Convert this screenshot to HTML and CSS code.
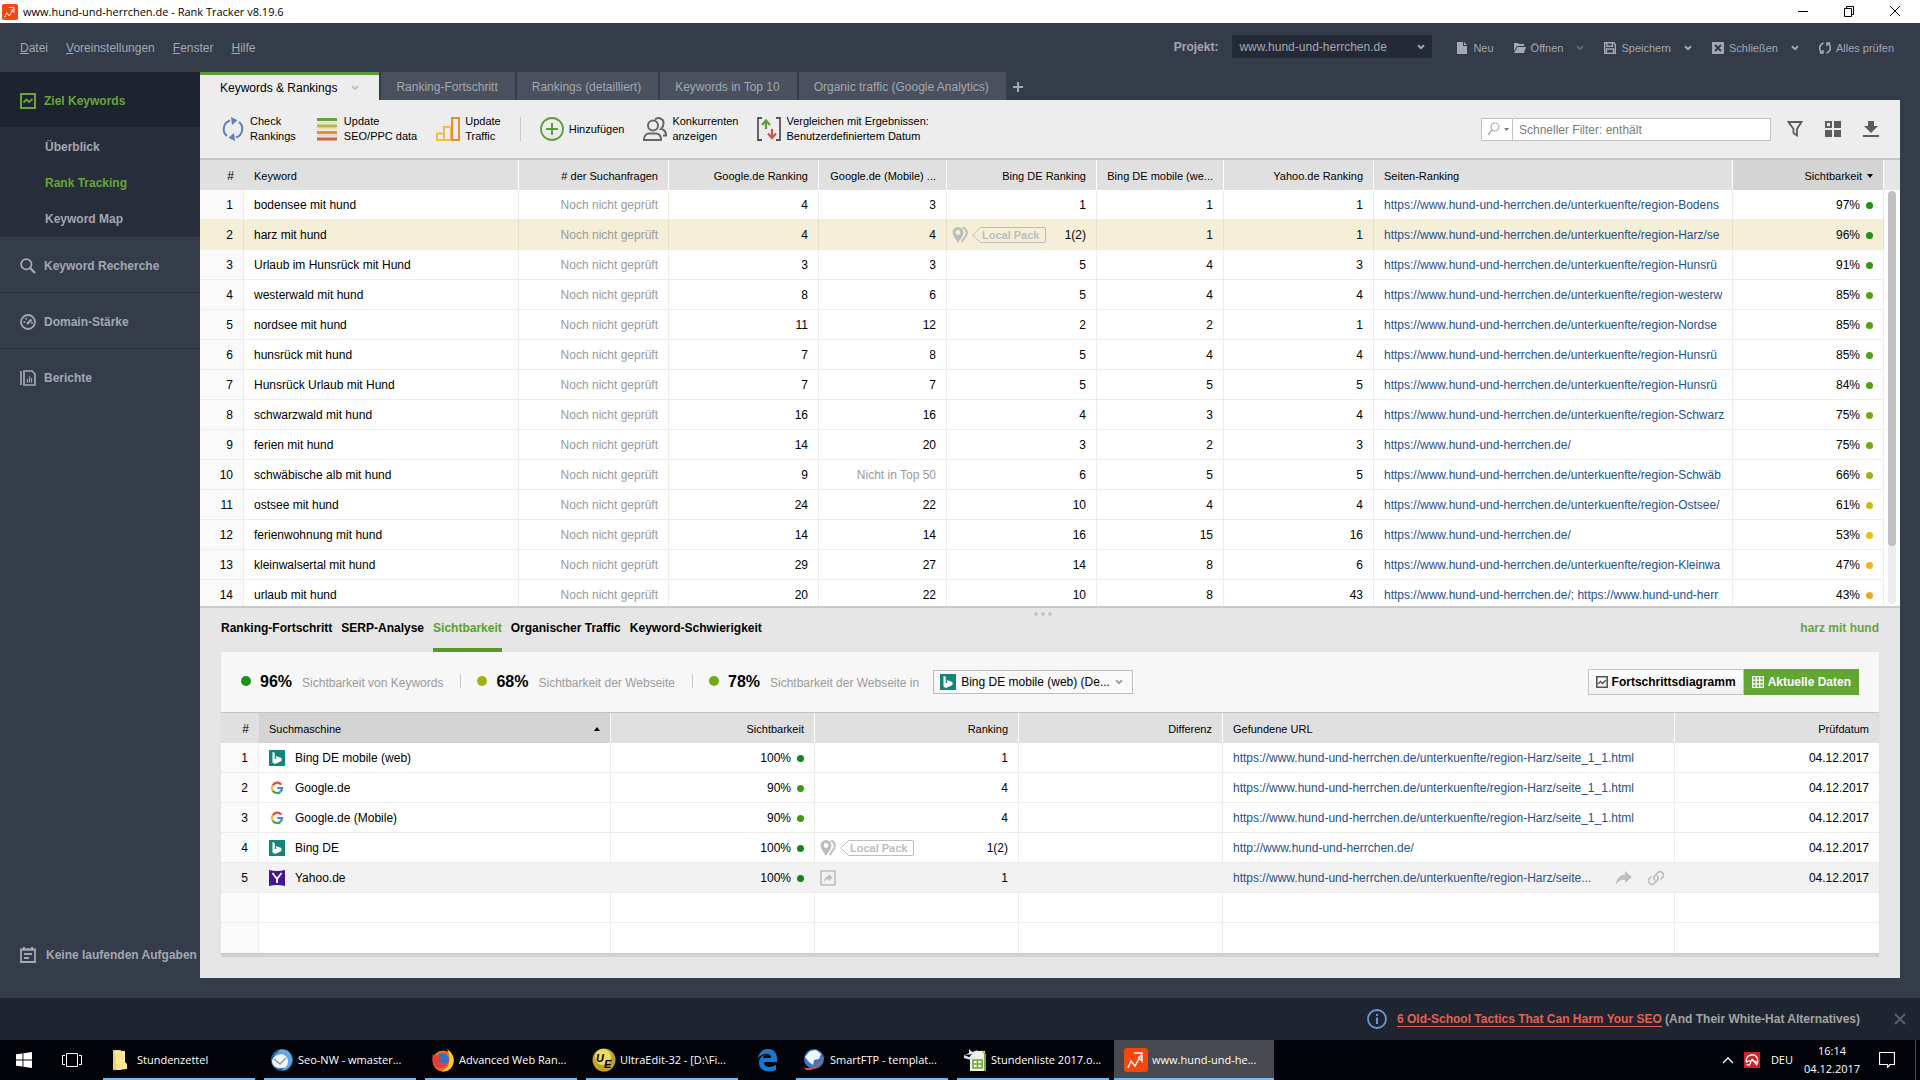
FILE: index.html
```
<!DOCTYPE html>
<html lang="de">
<head>
    <meta charset="UTF-8">
    <meta name="viewport" content="width=device-width, initial-scale=1.0">
    <title>www.hund-und-herrchen.de - Rank Tracker v8.19.6</title>
    <link rel="stylesheet" href="styles.css">
</head>
<body>
    <!-- Shared icons -->
    <svg class="sprite" aria-hidden="true">
        <symbol id="i-logo" viewBox="0 0 24 24"><rect width="24" height="24" rx="3" fill="#f4470f"/><path d="M4 20l3-7 4 5 6-11M10 5h8v8l-4-4" fill="none" stroke="#fff" stroke-width="1.400"/></symbol>
        <symbol id="i-chev" viewBox="0 0 8 6"><path d="M1 1.2l3 3 3-3" fill="none" stroke="currentColor" stroke-width="2"/></symbol>
        <symbol id="i-bing" viewBox="0 0 16 16"><rect width="16" height="16" fill="#14837b"/><path d="M3.500 2l2.200.8v6.500l1.800-.9-1-2.300L12.500 8v3L6 14l-2.500-1.400z" fill="#fff"/></symbol>
        <symbol id="i-google" viewBox="0 0 16 16"><g fill="none" stroke-width="2.200"><path d="M12.200 4.600A5 5 0 0 0 3.800 5.400" stroke="#e0493c"/><path d="M3.800 5.400a5 5 0 0 0 0 5.200" stroke="#f2b632"/><path d="M3.800 10.600a5 5 0 0 0 7.600 1.200" stroke="#3aa757"/><path d="M11.400 11.800A5 5 0 0 0 13 8H8.200" stroke="#4a83ec"/></g></symbol>
        <symbol id="i-yahoo" viewBox="0 0 16 16"><path d="M0 0q8 2 16 0v16q-8-2-16 0z" fill="#47158f"/><path d="M3.500 3L8 9l4.500-6M8 9v4" fill="none" stroke="#fff" stroke-width="1.800"/></symbol>
        <symbol id="i-pins" viewBox="0 0 16 18"><path d="M6 1a5.400 5.400 0 0 0-5.400 5.400C.6 10 4 13 6 17c2-4 5.400-7 5.400-10.600A5.400 5.400 0 0 0 6 1zm0 3a2.400 2.400 0 1 1 0 4.800A2.400 2.400 0 0 1 6 4z" fill="currentColor" fill-rule="evenodd"/><path d="M11 1.500c5 2.500 5 7 1 11L9.800 16" fill="none" stroke="currentColor" stroke-width="2"/></symbol>
        <symbol id="i-tag" viewBox="0 0 74 16"><path d="M8.500.5H72a1.500 1.500 0 0 1 1.500 1.500v12a1.500 1.500 0 0 1-1.500 1.500H8.500L.8 8z" fill="none" stroke="currentColor"/></symbol>
        <symbol id="i-share" viewBox="0 0 16 16"><path d="M9 1l7 6-7 6V9.800C5 9.500 2 11 0 15c0-6 4-10 9-10.500z" fill="currentColor"/></symbol>
    </svg>

    <header class="titlebar">
        <svg class="title-logo"><use href="#i-logo"/></svg>
        <span class="title-text">www.hund-und-herrchen.de - Rank Tracker v8.19.6</span>
        <div class="window-buttons">
            <button type="button" aria-label="Minimieren"><svg viewBox="0 0 12 12"><path d="M1 6.500h10" stroke="#000"/></svg></button>
            <button type="button" aria-label="Verkleinern"><svg viewBox="0 0 12 12"><path d="M1.500 3.500h7v8h-7zM3.500 3.500v-2h7v8h-2" fill="none" stroke="#000"/></svg></button>
            <button type="button" aria-label="Schließen"><svg viewBox="0 0 12 12"><path d="M1 1l10 10M11 1L1 11" stroke="#000"/></svg></button>
        </div>
    </header>

    <div class="menubar">
        <nav class="menu">
            <a href="#"><u>D</u>atei</a>
            <a href="#"><u>V</u>oreinstellungen</a>
            <a href="#"><u>F</u>enster</a>
            <a href="#"><u>H</u>ilfe</a>
        </nav>
        <div class="project">
            <label for="project">Projekt:</label>
            <div class="project-box">
                <select id="project"><option>www.hund-und-herrchen.de</option></select>
                <svg class="chev"><use href="#i-chev"/></svg>
            </div>
        </div>
        <div class="actions">
            <button type="button"><svg viewBox="0 0 12 12"><path d="M1 0h6v4h4v8H1zM8 0l3 3H8z" fill="currentColor"/></svg>Neu</button>
            <button type="button" class="has-menu"><svg viewBox="0 0 12 12"><path d="M0 1h4l1 1h5v2H3L0 9zM3.500 5H12l-2 6H0z" fill="currentColor"/></svg>Öffnen<svg class="chev dim"><use href="#i-chev"/></svg></button>
            <button type="button" class="has-menu"><svg viewBox="0 0 12 12"><path d="M.7.7h9l1.600 1.600v9H.7zM3 .7v3.500h5.500V.7M2.500 11V7h7v4" fill="none" stroke="currentColor" stroke-width="1.400"/></svg>Speichern<svg class="chev"><use href="#i-chev"/></svg></button>
            <button type="button" class="has-menu"><svg viewBox="0 0 12 12"><path d="M0 0h12v12H0z" fill="currentColor"/><path d="M3 3l6 6M9 3L3 9" stroke="#343b49" stroke-width="2"/></svg>Schließen<svg class="chev"><use href="#i-chev"/></svg></button>
            <button type="button"><svg viewBox="0 0 12 12"><path d="M4.500 1C-.5 3-.2 8.500 3 10.500M7.500 11c5-2 4.700-7.500 1.500-9.500M.8 11h3.200V8M11.200 1H8v3" fill="none" stroke="currentColor" stroke-width="1.500"/></svg>Alles prüfen</button>
        </div>
    </div>

    <div class="workspace">
        <aside class="sidebar">
            <a class="side-item active" href="#"><svg viewBox="0 0 16 16"><path d="M1 1h14v14H1z" fill="none" stroke="currentColor" stroke-width="2"/><path d="M3.500 9.500l3-3 2.500 2.500 3.500-3" fill="none" stroke="currentColor" stroke-width="1.800"/></svg>Ziel Keywords</a>
            <nav class="side-sub">
                <a href="#">Überblick</a>
                <a class="current" href="#">Rank Tracking</a>
                <a href="#">Keyword Map</a>
            </nav>
            <a class="side-item" href="#"><svg viewBox="0 0 16 16"><circle cx="6.300" cy="6.300" r="5.200" fill="none" stroke="currentColor" stroke-width="1.800"/><path d="M10 10l5 5" stroke="currentColor" stroke-width="2.400"/></svg>Keyword Recherche</a>
            <a class="side-item" href="#"><svg viewBox="0 0 16 16"><circle cx="8" cy="8" r="7" fill="none" stroke="currentColor" stroke-width="1.800"/><path d="M7 10l4.500-4.500" stroke="currentColor" stroke-width="2.400"/><circle cx="4.300" cy="8" r="1" fill="currentColor"/><circle cx="6.200" cy="4.800" r="1" fill="currentColor"/><circle cx="12" cy="9" r="1" fill="currentColor"/></svg>Domain-Stärke</a>
            <a class="side-item" href="#"><svg viewBox="0 0 16 16"><path d="M1 1v14M4 1h8l3 3v11H4z" fill="none" stroke="currentColor" stroke-width="1.700"/><path d="M7.500 12.500V9M9.500 12.500v-6M11.500 12.500V8" stroke="currentColor" stroke-width="1.200"/></svg>Berichte</a>
            <div class="tasks"><svg viewBox="0 0 16 16"><path d="M1 2.500h14V15H1z" fill="none" stroke="currentColor" stroke-width="1.800"/><path d="M2 2.500h12M4 0v3M12 0v3M4 7h8M4 11h5" stroke="currentColor" stroke-width="2"/></svg>Keine laufenden Aufgaben</div>
        </aside>

        <main class="content">
            <nav class="tabs">
                <a class="tab active" href="#">Keywords &amp; Rankings<svg class="chev"><use href="#i-chev"/></svg></a>
                <a class="tab" href="#">Ranking-Fortschritt</a>
                <a class="tab" href="#">Rankings (detailliert)</a>
                <a class="tab" href="#">Keywords in Top 10</a>
                <a class="tab" href="#">Organic traffic (Google Analytics)</a>
                <button type="button" class="tab-add" aria-label="Tab hinzufügen"><svg viewBox="0 0 10 10"><path d="M5 0v10M0 5h10" stroke="currentColor" stroke-width="2"/></svg></button>
            </nav>

            <div class="toolbar">
                <button type="button" class="tool"><svg viewBox="0 0 24 24"><path d="M9 3.500a9 9 0 0 0-3 15.500M15 20.500A9 9 0 0 0 18 5" fill="none" stroke="#5b82b5" stroke-width="2"/><path d="M10 0l6.500 3.200L11 8zM14 24l-6.500-3.200L13 16z" fill="#5b82b5"/></svg><span>Check<br>Rankings</span></button>
                <button type="button" class="tool"><svg viewBox="0 0 24 24"><path d="M2 2.500h20" stroke="#6b9e4a" stroke-width="3"/><path d="M2 6h20" stroke="#dfe8b8" stroke-width="2"/><path d="M2 9h20" stroke="#b4b84c" stroke-width="3"/><path d="M2 12h20" stroke="#f3e3a8" stroke-width="2"/><path d="M2 15.500h20" stroke="#e0923a" stroke-width="3"/><path d="M2 18.500h20" stroke="#f6d0b8" stroke-width="2"/><path d="M2 22h20" stroke="#d05f4c" stroke-width="3"/></svg><span>Update<br>SEO/PPC data</span></button>
                <button type="button" class="tool"><svg viewBox="0 0 24 24"><path d="M1 16.500h7V23H1zM8 10h7v13H8z" fill="none" stroke="#f0bf3e" stroke-width="2"/><path d="M16 1h7v22h-7z" fill="none" stroke="#e0903a" stroke-width="2"/></svg><span>Update<br>Traffic</span></button>
                <i class="divider"></i>
                <button type="button" class="tool"><svg viewBox="0 0 24 24"><circle cx="12" cy="12" r="11" fill="none" stroke="#5b9e3a" stroke-width="1.800"/><path d="M12 6v12M6 12h12" stroke="#5b9e3a" stroke-width="2"/></svg><span>Hinzufügen</span></button>
                <button type="button" class="tool"><svg viewBox="0 0 24 24"><g fill="none" stroke="#666" stroke-width="2"><circle cx="10" cy="8.500" r="5"/><path d="M1 23c0-4.500 2.500-6.500 5-6.500h7c3 0 5 2 5 6.500zM12 2.500c3-3 9-1 8.500 4 0 3-1.500 4.500-2.500 5.500 3 .5 5 2.500 5 6.500h-3"/></g></svg><span>Konkurrenten<br>anzeigen</span></button>
                <button type="button" class="tool"><svg viewBox="0 0 24 24"><path d="M5 1H1v22h4M19 1h4v22h-4" fill="none" stroke="#555" stroke-width="1.800"/><path d="M9 12V4M5 8l4-4.500L13 8" fill="none" stroke="#5b9e3a" stroke-width="2.200"/><path d="M15 12v8M11 16.500l4 4.500 4-4.500" fill="none" stroke="#cf5548" stroke-width="2.200"/></svg><span>Vergleichen mit Ergebnissen:<br>Benutzerdefiniertem Datum</span></button>
                <div class="search">
                    <button type="button" aria-label="Suchoptionen"><svg viewBox="0 0 22 14"><circle cx="8" cy="5" r="4" fill="none" stroke="#aaa" stroke-width="1.200"/><path d="M5 8l-4 5" stroke="#aaa" stroke-width="1.500"/><path d="M17 6h5l-2.500 3z" fill="#777"/></svg></button>
                    <input type="text" aria-label="Schneller Filter" placeholder="Schneller Filter: enthält">
                </div>
                <div class="view-tools">
                    <button type="button" aria-label="Filter"><svg viewBox="0 0 16 16"><path d="M1.500 1h13L10 8v6.500L6.500 12V8z" fill="none" stroke="#5c5c5c" stroke-width="1.800"/></svg></button>
                    <button type="button" aria-label="Ansicht"><svg viewBox="0 0 16 16"><path d="M9 0h7v7H9zM0 9h7v7H0zM9 9h7v7H9z" fill="#5c5c5c"/><path d="M1 1h5v5H1z" fill="none" stroke="#5c5c5c" stroke-width="2"/></svg></button>
                    <button type="button" aria-label="Export"><svg viewBox="0 0 16 16"><path d="M5 0h6v5h4l-7 7-7-7h4zM0 14h16v2H0z" fill="#5c5c5c"/></svg></button>
                </div>
            </div>

            <section class="keywords">
                <table class="grid">
                    <colgroup><col class="k-num"><col class="k-key"><col class="k-150"><col class="k-150"><col class="k-128"><col class="k-150"><col class="k-127"><col class="k-150"><col><col class="k-151"><col class="k-16"></colgroup>
                    <thead>
                        <tr><th class="r">#</th><th>Keyword</th><th class="r"># der Suchanfragen</th><th class="r">Google.de Ranking</th><th class="r">Google.de (Mobile) ...</th><th class="r">Bing DE Ranking</th><th class="r">Bing DE mobile (we...</th><th class="r">Yahoo.de Ranking</th><th>Seiten-Ranking</th><th class="r sorted">Sichtbarkeit<i class="sort down"></i></th><th class="corner"></th></tr>
                    </thead>
                    <tbody>
                        <tr><td>1</td><td>bodensee mit hund</td><td class="na">Noch nicht geprüft</td><td>4</td><td>3</td><td>1</td><td>1</td><td>1</td><td><a href="#">https://www.hund-und-herrchen.de/unterkuenfte/region-Bodens</a></td><td>97%<i class="dot g1"></i></td><td></td></tr>
                        <tr class="selected"><td>2</td><td>harz mit hund</td><td class="na">Noch nicht geprüft</td><td>4</td><td>4</td><td><div class="rank"><svg class="pins"><use href="#i-pins"/></svg><span class="tag"><svg><use href="#i-tag"/></svg>Local Pack</span><span>1(2)</span></div></td><td>1</td><td>1</td><td><a href="#">https://www.hund-und-herrchen.de/unterkuenfte/region-Harz/se</a></td><td>96%<i class="dot g1"></i></td><td></td></tr>
                        <tr><td>3</td><td>Urlaub im Hunsrück mit Hund</td><td class="na">Noch nicht geprüft</td><td>3</td><td>3</td><td>5</td><td>4</td><td>3</td><td><a href="#">https://www.hund-und-herrchen.de/unterkuenfte/region-Hunsrü</a></td><td>91%<i class="dot g2"></i></td><td></td></tr>
                        <tr><td>4</td><td>westerwald mit hund</td><td class="na">Noch nicht geprüft</td><td>8</td><td>6</td><td>5</td><td>4</td><td>4</td><td><a href="#">https://www.hund-und-herrchen.de/unterkuenfte/region-westerw</a></td><td>85%<i class="dot g3"></i></td><td></td></tr>
                        <tr><td>5</td><td>nordsee mit hund</td><td class="na">Noch nicht geprüft</td><td>11</td><td>12</td><td>2</td><td>2</td><td>1</td><td><a href="#">https://www.hund-und-herrchen.de/unterkuenfte/region-Nordse</a></td><td>85%<i class="dot g3"></i></td><td></td></tr>
                        <tr><td>6</td><td>hunsrück mit hund</td><td class="na">Noch nicht geprüft</td><td>7</td><td>8</td><td>5</td><td>4</td><td>4</td><td><a href="#">https://www.hund-und-herrchen.de/unterkuenfte/region-Hunsrü</a></td><td>85%<i class="dot g3"></i></td><td></td></tr>
                        <tr><td>7</td><td>Hunsrück Urlaub mit Hund</td><td class="na">Noch nicht geprüft</td><td>7</td><td>7</td><td>5</td><td>5</td><td>5</td><td><a href="#">https://www.hund-und-herrchen.de/unterkuenfte/region-Hunsrü</a></td><td>84%<i class="dot g3"></i></td><td></td></tr>
                        <tr><td>8</td><td>schwarzwald mit hund</td><td class="na">Noch nicht geprüft</td><td>16</td><td>16</td><td>4</td><td>3</td><td>4</td><td><a href="#">https://www.hund-und-herrchen.de/unterkuenfte/region-Schwarz</a></td><td>75%<i class="dot g4"></i></td><td></td></tr>
                        <tr><td>9</td><td>ferien mit hund</td><td class="na">Noch nicht geprüft</td><td>14</td><td>20</td><td>3</td><td>2</td><td>3</td><td><a href="#">https://www.hund-und-herrchen.de/</a></td><td>75%<i class="dot g4"></i></td><td></td></tr>
                        <tr><td>10</td><td>schwäbische alb mit hund</td><td class="na">Noch nicht geprüft</td><td>9</td><td class="na">Nicht in Top 50</td><td>6</td><td>5</td><td>5</td><td><a href="#">https://www.hund-und-herrchen.de/unterkuenfte/region-Schwäb</a></td><td>66%<i class="dot g5"></i></td><td></td></tr>
                        <tr><td>11</td><td>ostsee mit hund</td><td class="na">Noch nicht geprüft</td><td>24</td><td>22</td><td>10</td><td>4</td><td>4</td><td><a href="#">https://www.hund-und-herrchen.de/unterkuenfte/region-Ostsee/</a></td><td>61%<i class="dot g6"></i></td><td></td></tr>
                        <tr><td>12</td><td>ferienwohnung mit hund</td><td class="na">Noch nicht geprüft</td><td>14</td><td>14</td><td>16</td><td>15</td><td>16</td><td><a href="#">https://www.hund-und-herrchen.de/</a></td><td>53%<i class="dot g7"></i></td><td></td></tr>
                        <tr><td>13</td><td>kleinwalsertal mit hund</td><td class="na">Noch nicht geprüft</td><td>29</td><td>27</td><td>14</td><td>8</td><td>6</td><td><a href="#">https://www.hund-und-herrchen.de/unterkuenfte/region-Kleinwa</a></td><td>47%<i class="dot g8"></i></td><td></td></tr>
                        <tr><td>14</td><td>urlaub mit hund</td><td class="na">Noch nicht geprüft</td><td>20</td><td>22</td><td>10</td><td>8</td><td>43</td><td><a href="#">https://www.hund-und-herrchen.de/; https://www.hund-und-herr</a></td><td>43%<i class="dot g9"></i></td><td></td></tr>
                    </tbody>
                </table>
                <div class="scroll"><div class="thumb"></div></div>
            </section>

            <section class="details">
                <div class="grip"><i></i><i></i><i></i></div>
                <div class="detail-head">
                    <nav class="detail-tabs">
                        <a href="#">Ranking-Fortschritt</a>
                        <a href="#">SERP-Analyse</a>
                        <a class="current" href="#">Sichtbarkeit</a>
                        <a href="#">Organischer Traffic</a>
                        <a href="#">Keyword-Schwierigkeit</a>
                    </nav>
                    <span class="detail-keyword">harz mit hund</span>
                </div>
                <div class="card">
                    <div class="summary">
                        <div class="stat"><i class="dot big g1"></i><b>96%</b><span>Sichtbarkeit von Keywords</span></div>
                        <div class="stat"><i class="dot big g5"></i><b>68%</b><span>Sichtbarkeit der Webseite</span></div>
                        <div class="stat"><i class="dot big g4"></i><b>78%</b><label for="engine">Sichtbarkeit der Webseite in</label></div>
                        <div class="engine-box">
                            <svg class="fav"><use href="#i-bing"/></svg>
                            <select id="engine"><option>Bing DE mobile (web) (De...</option></select>
                            <svg class="chev"><use href="#i-chev"/></svg>
                        </div>
                        <div class="switch">
                            <button type="button"><svg viewBox="0 0 12 12"><path d="M.8.8h10.400v10.400H.8z" fill="none" stroke="#555" stroke-width="1.600"/><path d="M2 8l2.500-2.500 2 2L10 4" fill="none" stroke="#555" stroke-width="1.300"/></svg>Fortschrittsdiagramm</button>
                            <button type="button" class="on"><svg viewBox="0 0 12 12"><path d="M.7.7h10.600v10.600H.7zM4.200.7v10.600M7.800.7v10.600M.7 4.200h10.600M.7 7.800h10.600" fill="none" stroke="#fff" stroke-width="1.300"/></svg>Aktuelle Daten</button>
                        </div>
                    </div>
                    <table class="grid engines">
                        <colgroup><col class="e-num"><col class="e-name"><col class="e-204"><col class="e-204"><col class="e-204"><col><col class="e-204"></colgroup>
                        <thead>
                            <tr><th class="r">#</th><th class="sorted"><div class="sort-head">Suchmaschine<i class="sort up"></i></div></th><th class="r">Sichtbarkeit</th><th class="r">Ranking</th><th class="r">Differenz</th><th>Gefundene URL</th><th class="r">Prüfdatum</th></tr>
                        </thead>
                        <tbody>
                            <tr><td>1</td><td><div class="engine"><svg><use href="#i-bing"/></svg>Bing DE mobile (web)</div></td><td>100%<i class="dot g0"></i></td><td>1</td><td></td><td><a href="#">https://www.hund-und-herrchen.de/unterkuenfte/region-Harz/seite_1_1.html</a></td><td>04.12.2017</td></tr>
                            <tr><td>2</td><td><div class="engine"><svg><use href="#i-google"/></svg>Google.de</div></td><td>90%<i class="dot g2"></i></td><td>4</td><td></td><td><a href="#">https://www.hund-und-herrchen.de/unterkuenfte/region-Harz/seite_1_1.html</a></td><td>04.12.2017</td></tr>
                            <tr><td>3</td><td><div class="engine"><svg><use href="#i-google"/></svg>Google.de (Mobile)</div></td><td>90%<i class="dot g2"></i></td><td>4</td><td></td><td><a href="#">https://www.hund-und-herrchen.de/unterkuenfte/region-Harz/seite_1_1.html</a></td><td>04.12.2017</td></tr>
                            <tr><td>4</td><td><div class="engine"><svg><use href="#i-bing"/></svg>Bing DE</div></td><td>100%<i class="dot g0"></i></td><td><div class="rank"><svg class="pins"><use href="#i-pins"/></svg><span class="tag"><svg><use href="#i-tag"/></svg>Local Pack</span><span>1(2)</span></div></td><td></td><td><a href="#">http://www.hund-und-herrchen.de/</a></td><td>04.12.2017</td></tr>
                            <tr class="hover"><td>5</td><td><div class="engine"><svg><use href="#i-yahoo"/></svg>Yahoo.de</div></td><td>100%<i class="dot g0"></i></td><td><div class="rank"><svg class="boxed" viewBox="0 0 16 16"><path d="M1 1h14v14H1z" fill="none" stroke="currentColor" stroke-width="1.600"/><path d="M8.500 4l4 3.500-4 3.500V9C6.500 9 5 10 4 12c0-3.500 2-5.500 4.500-6z" fill="currentColor"/></svg><span>1</span></div></td><td></td><td><div class="url-tools"><a href="#">https://www.hund-und-herrchen.de/unterkuenfte/region-Harz/seite...</a><svg><use href="#i-share"/></svg><svg viewBox="0 0 16 16"><g fill="none" stroke="currentColor" stroke-width="1.700"><path d="M7 10.500A3.500 3.500 0 0 1 7 5.600l2.800-3A3.400 3.400 0 0 1 14.500 7.500l-2 2"/><path d="M9 5.500a3.500 3.500 0 0 1 0 4.900l-2.800 3A3.400 3.400 0 0 1 1.500 8.500l2-2"/></g></svg></div></td><td>04.12.2017</td></tr>
                            <tr><td></td><td></td><td></td><td></td><td></td><td></td><td></td></tr>
                            <tr><td></td><td></td><td></td><td></td><td></td><td></td><td></td></tr>
                        </tbody>
                    </table>
                </div>
            </section>
        </main>
    </div>

    <div class="notice">
        <svg class="info" viewBox="0 0 20 20"><circle cx="10" cy="10" r="9" fill="none" stroke="currentColor" stroke-width="1.800"/><path d="M10 8.500V15M10 5v2" stroke="currentColor" stroke-width="2"/></svg>
        <p><a href="#">6 Old-School Tactics That Can Harm Your SEO</a> (And Their White-Hat Alternatives)</p>
        <button type="button" aria-label="Schließen"><svg viewBox="0 0 12 12"><path d="M1 1l10 10M11 1L1 11" stroke="currentColor" stroke-width="2"/></svg></button>
    </div>

    <footer class="taskbar">
        <button type="button" class="sys" aria-label="Start"><svg viewBox="0 0 16 16"><path d="M0 2.300l6.500-.9v6.100H0zM7.400 1.200L16 0v7.500H7.400zM0 8.400h6.500v6.200L0 13.700zM7.400 8.400H16V16l-8.600-1.200z" fill="#fff"/></svg></button>
        <button type="button" class="sys view" aria-label="Taskansicht"><svg viewBox="0 0 20 14"><path d="M4.500.5h11v13h-11zM3 2.500H.5v9H3M17 2.500h2.500v9H17" fill="none" stroke="#fff"/></svg></button>
        <div class="apps">
            <button type="button" class="app"><svg viewBox="0 0 24 24"><path d="M4 2h8v20H4z" fill="#f1cf74"/><path d="M6 3h10v11l2 2v5l-10 1z" fill="#ffe694"/></svg>Stundenzettel</button>
            <button type="button" class="app"><svg viewBox="0 0 24 24"><circle cx="12" cy="12" r="11" fill="#245f9f"/><path d="M8 3c6-4 15 1 14 10-1 6-6 10-10 9 5-4 6-10 2-14z" fill="#63a9de"/><path d="M2 14c0-4 4-8 9-8 4 0 7 4 7 7 0 4-2 7-5 7-6 1-10-1-11-6z" fill="#f3f5f7"/><path d="M4 11l6 5 6-6" fill="none" stroke="#8496a8" stroke-width="1.400"/><path d="M4 8c2-4 8-6 12-3-4 0-8 1-12 3z" fill="#63a9de"/></svg>Seo-NW - wmaster...</button>
            <button type="button" class="app"><svg viewBox="0 0 24 24"><circle cx="12" cy="13" r="10.500" fill="#f0652b"/><path d="M16 1c8 5 9 15 3 20-2 2-6 3-9 2 8-1 11-12 6-22z" fill="#ffca28"/><circle cx="11.500" cy="11.500" r="6.500" fill="#2d74c7"/><path d="M2 6c1 2 3 1 6 2l3 3c-2 0-3 1-2 3 2 3 6 1 7 1-1 5-8 7-12 3C1 14 1 9 2 6z" fill="#e83a36"/></svg>Advanced Web Ran...</button>
            <button type="button" class="app"><svg viewBox="0 0 24 24"><circle cx="12" cy="12" r="11.500" fill="#bda129"/><circle cx="11" cy="9" r="8" fill="#eddb68"/><text class="ue" x="4" y="14">U</text><text class="ue" x="12" y="20">E</text></svg>UltraEdit-32 - [D:\Fi...</button>
            <button type="button" class="app edge" aria-label="Edge"><svg viewBox="0 0 24 24"><path d="M3 10C4 4 8 1 13 1c6 0 9 4 9 10v3H9c0 6 7 6 12 3v5C12 26 4 22 4 15c0-4 2-7 6-8-1 1-2 2-2 3h8c0-6-9-5-13 0z" fill="#1679d1"/></svg></button>
            <button type="button" class="app"><svg viewBox="0 0 24 24"><circle cx="12" cy="11" r="10" fill="#3a78c8"/><path d="M8 3l6-1 5 4-2 5-5 1-1 5-4-3-4-5z" fill="#f1f5fa"/><path d="M1 18c4 5 16 1 22-11-3 10-13 17-19 15z" fill="#d75433"/></svg>SmartFTP - templat...</button>
            <button type="button" class="app"><svg viewBox="0 0 24 24"><path d="M7 8l6-5 9 0v20H7z" fill="#eef3e4"/><path d="M6 1l3 3 6-2-4 4-9 1 4-2zM1 7l5 2 8-1-6 4-7-2z" fill="#dce6ec"/><path d="M10 12h9v8h-9zM10 16h9M14.500 12v8" fill="#fff" stroke="#69a52f" stroke-width="1.600"/><path d="M18 1l5 5v17h-2V6z" fill="#78a844"/></svg>Stundenliste 2017.o...</button>
            <button type="button" class="app active"><svg><use href="#i-logo"/></svg>www.hund-und-he...</button>
        </div>
        <div class="tray">
            <svg class="tray-more" viewBox="0 0 12 8"><path d="M1 7l5-5 5 5" fill="none" stroke="#fff" stroke-width="1.300"/></svg>
            <svg class="avira" viewBox="0 0 16 16"><path d="M0 0h16v16H0z" fill="#d3202c"/><path d="M2.500 10C1 4 9 0 13 5.500c1 2 1 4 .5 5.500-2-3-7-3-11-1zM8 7l-2 5c-1 2-3 1-3 0M8 7l5 6" fill="none" stroke="#fff" stroke-width="1.300"/></svg>
            <span>DEU</span>
            <time class="clock">16:14<br>04.12.2017</time>
            <svg class="note" viewBox="0 0 16 16"><path d="M.5.5h15v12H11l-2.500 3v-3h-8z" fill="none" stroke="#fff" stroke-width="1.200"/></svg>
        </div>
    </footer>
</body>
</html>
```

FILE: styles.css
```
* {
    box-sizing: border-box;
}

body {
    margin: 0;
    height: 100vh;
    display: flex;
    flex-direction: column;
    overflow: hidden;
    background: #343b49;
    color: #000;
    font-family: "Liberation Sans", Arial, sans-serif;
    font-size: 12px;
    line-height: 16px;
}

a {
    color: inherit;
    text-decoration: none;
}

button,
select,
input {
    margin: 0;
    padding: 0;
    border: 0;
    background: none;
    color: inherit;
    font: inherit;
}

select {
    appearance: none;
}

svg {
    display: block;
    flex: none;
}

.sprite {
    position: absolute;
    width: 0;
    height: 0;
}

.chev {
    width: 8px;
    height: 6px;
}

/* Title bar */
.titlebar {
    display: flex;
    align-items: center;
    height: 23px;
    flex: none;
    padding-left: 2px;
    background: #fff;
    font-family: "Open Sans", "Noto Sans", sans-serif;
}

.title-logo {
    width: 16px;
    height: 16px;
    margin-right: 5px;
}

.title-text {
    font-size: 11px;
}

.window-buttons {
    display: flex;
    margin-left: auto;
    margin-right: 2px;
}

.window-buttons button {
    display: flex;
    justify-content: center;
    width: 46px;
    padding-bottom: 2px;
}

.window-buttons svg {
    width: 12px;
    height: 12px;
}

/* Menu */
.menubar {
    display: flex;
    align-items: center;
    height: 49px;
    flex: none;
    padding: 0 26px 0 20px;
    color: #a3a8b1;
}

.menu {
    display: flex;
    gap: 18px;
}

.project {
    display: flex;
    align-items: center;
    gap: 14px;
    margin-left: auto;
    margin-right: 24px;
    padding-bottom: 2px;
    font-weight: bold;
}

.project-box {
    display: flex;
    align-items: center;
    width: 200px;
    height: 23px;
    padding: 0 7px;
    background: #232936;
    font-weight: normal;
}

.project-box select {
    flex: 1;
}

.actions {
    display: flex;
    gap: 20px;
    font-size: 11px;
}

.actions button {
    display: flex;
    align-items: center;
    gap: 5px;
}

.actions svg:first-child {
    width: 12px;
    height: 12px;
}

.actions .chev {
    margin-left: 8px;
}

.dim {
    opacity: 0.4;
}

.workspace {
    display: flex;
    flex: 1;
    min-height: 0;
    padding: 0 20px 20px 0;
}

/* Sidebar */
.sidebar {
    display: flex;
    flex-direction: column;
    width: 200px;
    flex: none;
    color: #a3a8b1;
    font-weight: bold;
}

.side-item {
    display: flex;
    align-items: center;
    gap: 8px;
    height: 56px;
    padding: 2px 0 0 20px;
    border-bottom: 1px solid #282e3a;
}

.side-item:nth-of-type(4) {
    border-bottom: 0;
}

.side-item svg,
.tasks svg {
    width: 16px;
    height: 16px;
}

.side-item.active {
    background: #1e242f;
    color: #66a63c;
}

.side-sub {
    display: flex;
    flex-direction: column;
    padding-top: 1px;
    background: #272d39;
}

.side-sub a {
    padding: 10px 0 10px 45px;
}

.side-sub .current {
    color: #66a63c;
}

.tasks {
    display: flex;
    align-items: center;
    gap: 10px;
    margin-top: auto;
    padding: 0 0 15px 20px;
    white-space: nowrap;
}

.content {
    display: flex;
    flex-direction: column;
    flex: 1;
    min-width: 0;
}

/* Tabs */
.tabs {
    display: flex;
    gap: 2px;
    height: 28px;
    flex: none;
    color: #a3a8b1;
}

.tab {
    display: flex;
    align-items: center;
    padding: 2px 17px 0 15px;
    background: #4a505d;
}

.tab.active {
    gap: 14px;
    padding: 0 20px;
    border-top: 3px solid #5f9a38;
    background: #ededed;
    color: #000;
}

.tab.active .chev {
    color: #c0c0c0;
}

.tab-add {
    padding: 2px 5px 0;
}

.tab-add svg {
    width: 10px;
    height: 10px;
}

/* Toolbar */
.toolbar {
    display: flex;
    align-items: center;
    gap: 19px;
    height: 60px;
    flex: none;
    padding: 0 21px;
    border-bottom: 2px solid #c6c6c6;
    background: #ededed;
    font-size: 11px;
    line-height: 15px;
}

.tool {
    display: flex;
    align-items: center;
    gap: 5px;
    text-align: left;
}

.tool svg {
    width: 24px;
    height: 24px;
}

.divider {
    width: 1px;
    height: 24px;
    background: #c8c8c8;
}

.search {
    display: flex;
    width: 290px;
    height: 23px;
    margin-left: auto;
    border: 1px solid #c2c2c2;
    background: #fff;
    font-size: 12px;
}

.search button {
    width: 31px;
    padding-left: 5px;
    border-right: 1px solid #c2c2c2;
}

.search button svg {
    width: 22px;
    height: 14px;
}

.search input {
    flex: 1;
    min-width: 0;
    padding: 2px 6px 0;
}

.search input::placeholder {
    color: #7b7b7b;
}

.view-tools {
    display: flex;
    gap: 22px;
    margin-left: -3px;
}

.view-tools svg {
    width: 16px;
    height: 16px;
}

/* Tables */
.grid {
    width: 100%;
    border-collapse: separate;
    border-spacing: 0;
    table-layout: fixed;
    background: #fff;
}

.grid th {
    height: 30px;
    padding: 2px 10px 0;
    border-right: 1px solid #fff;
    background: #e0e0e0;
    font-size: 11px;
    font-weight: normal;
    text-align: left;
    white-space: nowrap;
    overflow: hidden;
}

.grid th:first-child {
    border-right: 0;
    font-size: 12px;
}

.grid th.r {
    text-align: right;
}

.grid th.sorted {
    background: #d4d4d4;
}

.grid th.corner {
    border-right: 0;
    background: #e6e6e6;
}

.grid td {
    height: 30px;
    padding: 0 10px;
    border-right: 1px solid #ececec;
    border-bottom: 1px solid #ececec;
    text-align: right;
    white-space: nowrap;
    overflow: hidden;
}

.grid td:first-child {
    background: #fafafa;
}

.grid td:nth-child(2) {
    text-align: left;
}

.grid td a {
    color: #27508c;
}

.grid .na {
    color: #9a9a9a;
}

.keywords {
    position: relative;
    flex: 1;
    min-height: 0;
    overflow: hidden;
    border-bottom: 2px solid #c9c9c9;
    background: #fff;
}

.keywords td:nth-child(9) {
    padding-right: 0;
    text-align: left;
}

.keywords td:last-child {
    border: 0;
}

.keywords .selected td,
.keywords .selected td:first-child {
    background: #f6efd8;
    border-right-color: #e6dfc6;
}

.keywords .selected td:last-child {
    background: #fff;
}

.k-num { width: 44px; }
.k-key { width: 275px; }
.k-150 { width: 150px; }
.k-128 { width: 128px; }
.k-127 { width: 127px; }
.k-151 { width: 151px; }
.k-16 { width: 16px; }

.sort {
    display: inline-block;
    border: 3px solid transparent;
}

.sort.down {
    margin-left: 5px;
    border-top: 4px solid #000;
    border-bottom: 0;
    vertical-align: 2px;
}

.sort.up {
    border-top: 0;
    border-bottom: 4px solid #000;
}

.sort-head {
    display: flex;
    align-items: center;
    justify-content: space-between;
}

.dot {
    display: inline-block;
    width: 7px;
    height: 7px;
    margin-left: 6px;
    border-radius: 50%;
}

.g0 { background: #12861a; }
.g1 { background: #1c9312; }
.g2 { background: #389a14; }
.g3 { background: #4ea30f; }
.g4 { background: #72ab10; }
.g5 { background: #a3b212; }
.g6 { background: #c8b914; }
.g7 { background: #e6bf17; }
.g8 { background: #ebb61c; }
.g9 { background: #e9ab1e; }

.rank {
    display: flex;
    align-items: center;
    margin-left: -5px;
    color: #bdbdbd;
}

.rank > span:last-child {
    margin-left: auto;
    color: #000;
}

.pins {
    width: 16px;
    height: 18px;
    margin-right: 4px;
}

.boxed {
    width: 16px;
    height: 16px;
}

.tag {
    position: relative;
    width: 74px;
    padding-left: 10px;
    font-size: 11px;
    font-weight: bold;
    text-align: left;
}

.tag svg {
    position: absolute;
    top: 0;
    left: 0;
    width: 74px;
    height: 16px;
}

/* Scrollbar lies over the last column */
.scroll {
    position: absolute;
    top: 31px;
    right: 4px;
    bottom: 2px;
    width: 8px;
    border-radius: 4px;
    background: #ededed;
}

.thumb {
    height: 86%;
    border-radius: 4px;
    background: #c1c1c1;
}

/* Details */
.details {
    flex: none;
    padding: 4px 21px 24px;
    background: #e6e6e6;
}

.grip {
    display: flex;
    justify-content: center;
    gap: 3px;
    height: 4px;
    margin-right: 14px;
}

.grip i {
    width: 4px;
    height: 4px;
    border-radius: 50%;
    background: #c4c4c4;
}

.detail-head {
    display: flex;
    justify-content: space-between;
    height: 36px;
    padding-top: 4px;
    font-weight: bold;
}

.detail-tabs {
    display: flex;
    gap: 9px;
}

.detail-tabs .current {
    border-bottom: 4px solid #58982a;
    color: #5aa02e;
}

.detail-keyword {
    color: #66a344;
}

.card {
    border-bottom: 1px solid #c8c8c8;
    box-shadow: 0 3px 1px #d2d2d2;
    background: #fff;
}

.summary {
    display: flex;
    align-items: center;
    height: 61px;
    padding: 0 20px;
    border-bottom: 1px solid #c4c4c4;
    background: #f7f7f7;
}

.stat {
    display: flex;
    align-items: baseline;
    color: #9b9b9b;
}

.stat + .stat {
    margin-left: 17px;
    padding-left: 17px;
    background: linear-gradient(#c8c8c8, #c8c8c8) 0 0 / 1px 14px no-repeat;
}

.stat b {
    margin: 0 10px 0 9px;
    color: #000;
    font-size: 16px;
}

.dot.big {
    width: 10px;
    height: 10px;
    margin-left: 0;
    align-self: flex-start;
    margin-top: 2px;
}

.engine-box {
    display: flex;
    align-items: center;
    width: 200px;
    height: 24px;
    margin-left: 14px;
    padding: 0 9px 0 6px;
    border: 1px solid #bdbdbd;
    background: #f9f9f9;
}

.engine-box select {
    flex: 1;
    min-width: 0;
    margin-left: 5px;
}

.engine-box .chev {
    color: #a0a0a0;
}

.fav {
    width: 16px;
    height: 16px;
}

.switch {
    display: flex;
    margin-left: auto;
    font-weight: bold;
}

.switch button {
    display: flex;
    align-items: center;
    gap: 4px;
    height: 26px;
    padding: 0 7px;
    border: 1px solid #c4c4c4;
    background: linear-gradient(#fff, #f0f0f0);
}

.switch .on {
    border-color: #62a532;
    background: #62a532;
    color: #fff;
}

.switch svg {
    width: 12px;
    height: 12px;
}

.engines th:last-child,
.engines td:last-child {
    border-right: 0;
}

.engines td:nth-child(6) {
    text-align: left;
}

.engines .hover td,
.engines .hover td:first-child {
    border-right-color: #f2f2f2;
    background: #f2f2f2;
}

.engines tr:last-child td {
    border-bottom: 0;
}

.e-num { width: 38px; }
.e-name { width: 352px; }
.e-204 { width: 204px; }

.engine {
    display: flex;
    align-items: center;
    gap: 10px;
}

.engine svg,
.url-tools svg {
    width: 16px;
    height: 16px;
}

.url-tools {
    display: flex;
    align-items: center;
    gap: 16px;
    color: #bdbdbd;
}

.url-tools a {
    margin-right: auto;
}

/* Notice */
.notice {
    display: flex;
    align-items: center;
    justify-content: flex-end;
    height: 42px;
    flex: none;
    padding-right: 14px;
    background: #1f2530;
    color: #a3a3a3;
    font-weight: bold;
}

.notice .info {
    width: 20px;
    height: 20px;
    margin-right: 10px;
    color: #6d95cf;
}

.notice p {
    margin: 0;
}

.notice a {
    border-bottom: 1px solid #e5604e;
    color: #e5604e;
}

.notice button {
    margin-left: 34px;
    color: #59606c;
}

.notice button svg {
    width: 12px;
    height: 12px;
}

/* Taskbar */
.taskbar {
    display: flex;
    align-items: stretch;
    height: 40px;
    flex: none;
    background: #020409;
    color: #fff;
    font-family: "Open Sans", "Noto Sans", sans-serif;
    font-size: 11px;
}

.sys {
    display: flex;
    align-items: center;
    justify-content: center;
    width: 48px;
}

.sys svg {
    width: 16px;
    height: 16px;
}

.view svg {
    width: 20px;
    height: 14px;
}

.apps {
    display: flex;
    gap: 9px;
    margin-left: 7px;
}

.app {
    display: flex;
    align-items: center;
    gap: 4px;
    width: 152px;
    padding-left: 6px;
    border-top: 2px solid transparent;
    border-bottom: 2px solid #76b9ed;
    white-space: nowrap;
}

.app svg {
    width: 24px;
    height: 24px;
}

.app.edge {
    width: 40px;
    padding-left: 8px;
    border-bottom-color: transparent;
}

.app.active {
    width: 160px;
    margin-left: -4px;
    padding-left: 10px;
    border-top-color: #46494d;
    background: #46494d;
}

.ue {
    font: italic bold 11px "Liberation Sans", sans-serif;
}

.tray {
    display: flex;
    align-items: center;
    margin-left: auto;
    margin-right: 4px;
    padding-right: 20px;
    border-right: 1px solid #4b4d50;
}

.tray-more {
    width: 12px;
    height: 8px;
}

.avira {
    width: 16px;
    height: 16px;
    margin: 0 11px 0 10px;
}

.clock {
    width: 78px;
    line-height: 18px;
    text-align: center;
}

.note {
    width: 16px;
    height: 16px;
    margin-left: 8px;
}
```
